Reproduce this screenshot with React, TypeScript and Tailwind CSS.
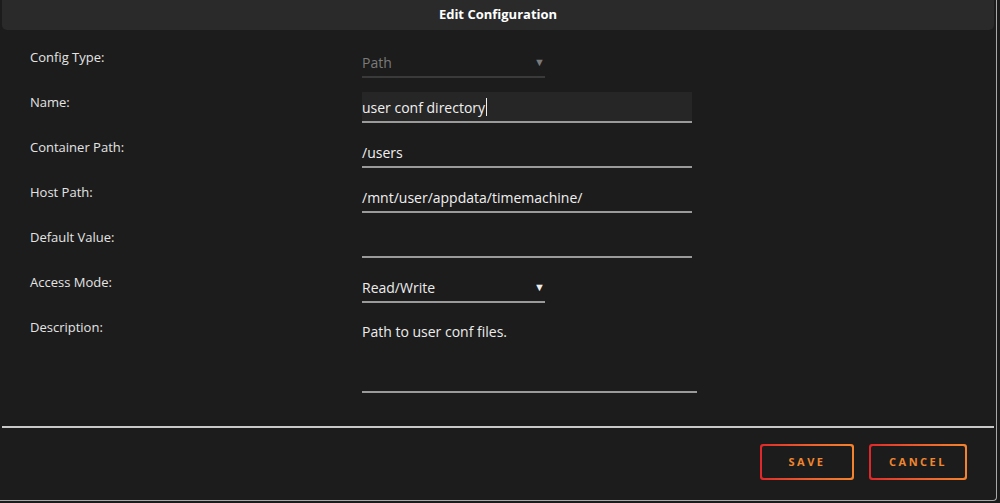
const font = { fontFamily: '"Open Sans", "Noto Sans", sans-serif' };

type Row = {
  label: string;
  kind: 'select' | 'input' | 'textarea';
  value: string;
  muted?: boolean;
  filled?: boolean;
  caret?: boolean;
};

const rows: Row[] = [
  { label: 'Config Type:', kind: 'select', value: 'Path', muted: true },
  { label: 'Name:', kind: 'input', value: 'user conf directory', filled: true, caret: true },
  { label: 'Container Path:', kind: 'input', value: '/users' },
  { label: 'Host Path:', kind: 'input', value: '/mnt/user/appdata/timemachine/' },
  { label: 'Default Value:', kind: 'input', value: '' },
  { label: 'Access Mode:', kind: 'select', value: 'Read/Write' },
  { label: 'Description:', kind: 'textarea', value: 'Path to user conf files.' },
];

function Field({ row }: { row: Row }) {
  if (row.kind === 'select') {
    return (
      <div
        className={`flex h-[31px] w-[183px] items-center justify-between border-b-2 pt-[1px] text-[14px] ${
          row.muted ? 'border-[#3a3a3a] text-[#7a7a7a]' : 'border-[#9a9a9a] text-[#ececec]'
        }`}
      >
        <span>{row.value}</span>
        <span className="text-[11px]">▼</span>
      </div>
    );
  }
  if (row.kind === 'textarea') {
    return (
      <div className="h-[76px] w-[335px] border-b-2 border-[#9a9a9a] pt-[4px] text-[14px] text-[#ececec]">
        {row.value}
      </div>
    );
  }
  return (
    <div
      className={`flex h-[31px] w-[330px] items-center border-b-2 border-[#9a9a9a] pt-[1px] text-[14px] text-[#f0f0f0] ${
        row.filled ? 'bg-[#262626]' : ''
      }`}
    >
      <span>{row.value}</span>
      {row.caret && <span className="ml-[1px] h-[18px] w-px bg-[#f0f0f0]" />}
    </div>
  );
}

function OutlineButton({ label, width }: { label: string; width: string }) {
  return (
    <div className={`rounded-[3px] bg-gradient-to-r from-[#e0262a] to-[#f5832e] p-[2px] ${width}`}>
      <div className="flex h-[32px] items-center justify-center rounded-[2px] bg-[#1c1c1c] text-[11px] font-bold tracking-[2.5px] text-[#f0862f]">
        {label}
      </div>
    </div>
  );
}

export default function App() {
  return (
    <div className="h-[503px] w-[1000px] overflow-hidden bg-[#1b1b1b]" style={font}>
      <div className="flex h-[501px] w-[997px] flex-col rounded-br-[4px] border-r border-b border-[#a8a8a8] bg-[#1c1c1c]">
        {/* Header */}
        <div className="mx-[2px] flex h-[30px] items-center justify-center rounded-b-[5px] bg-[#2a2a2a] text-[13px] font-bold text-white">
          Edit Configuration
        </div>

        {/* Form */}
        <div className="flex flex-col gap-[14px] pt-[17px]">
          {rows.map((row) => (
            <div key={row.label} className="flex items-start">
              <div className="w-[362px] pl-[30px] text-[13px] leading-[20px] text-[#e4e4e4]">{row.label}</div>
              <Field row={row} />
            </div>
          ))}
        </div>

        {/* Footer */}
        <div className="mx-[2px] mt-[33px] h-[2px] bg-[#c8c8c8]" />
        <div className="flex justify-end gap-[15px] pt-[16px] pr-[29px]">
          <OutlineButton label="SAVE" width="w-[94px]" />
          <OutlineButton label="CANCEL" width="w-[98px]" />
        </div>
      </div>
    </div>
  );
}
